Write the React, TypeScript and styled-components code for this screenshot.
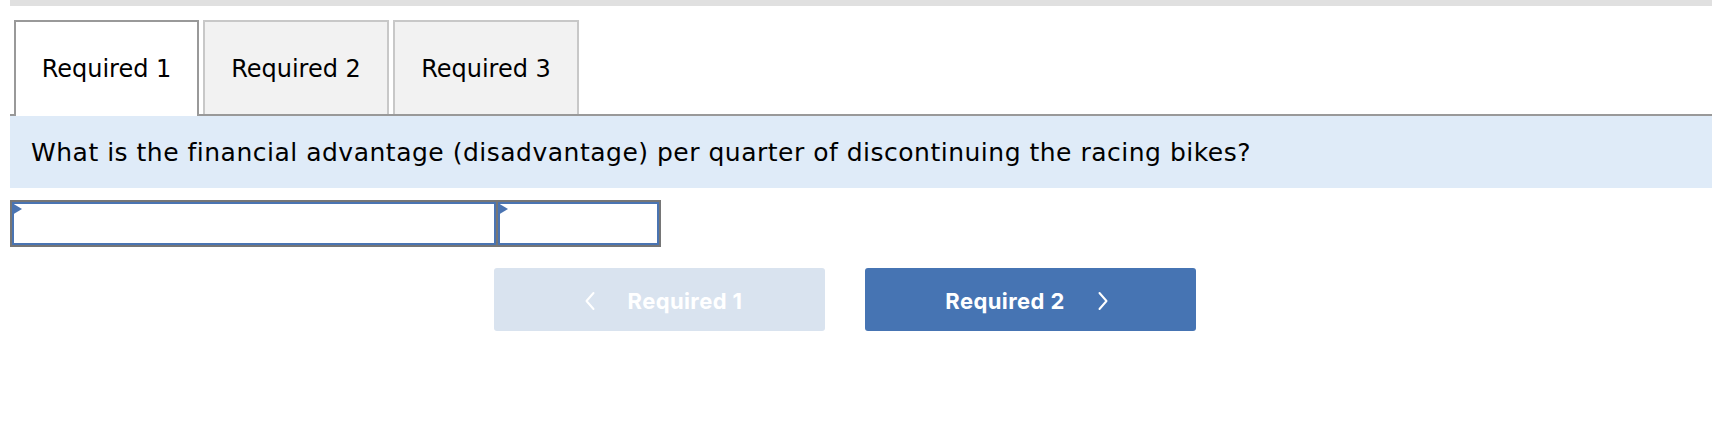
import React from "react";
import styled, { createGlobalStyle } from "styled-components";

const GlobalStyle = createGlobalStyle`
  html, body {
    margin: 0;
    padding: 0;
    background: #ffffff;
  }
  body {
    font-family: "DejaVu Sans", Verdana, sans-serif;
    color: #000;
  }
`;

const Page = styled.div`
  width: 1702px;
  margin-left: 10px;
  display: flex;
  flex-direction: column;
`;

const TopBar = styled.div`
  height: 6px;
  background: #e0e0e0;
`;

const TabRow = styled.div`
  margin-top: 14px;
  display: flex;
  align-items: flex-start;
  gap: 4px;
  padding-left: 4px;
  border-bottom: 2px solid #999999;
  height: 94px;
`;

const Tab = styled.div<{ $active?: boolean }>`
  box-sizing: border-box;
  width: ${(p) => (p.$active ? "185px" : "186px")};
  height: ${(p) => (p.$active ? "96px" : "94px")};
  border: 2px solid ${(p) => (p.$active ? "#999999" : "#c8c8c8")};
  border-bottom: none;
  background: ${(p) => (p.$active ? "#ffffff" : "#f2f2f2")};
  display: flex;
  align-items: center;
  justify-content: center;
  padding-bottom: ${(p) => (p.$active ? "2px" : "0")};
  padding-top: 2px;
  font-family: "DejaVu Sans", Verdana, sans-serif;
  font-size: 24px;
  color: #000;
  position: relative;
`;

const Question = styled.div`
  height: 72px;
  background: #dfebf8;
  display: flex;
  align-items: center;
  padding-left: 21px;
  font-family: "DejaVu Sans", Verdana, sans-serif;
  font-size: 25px;
  letter-spacing: 0.5px;
  color: #000;
`;

const InputTable = styled.div`
  margin-top: 12px;
  width: 651px;
  box-sizing: border-box;
  display: flex;
  gap: 2px;
  padding: 2px;
  background: #767676;
`;

const Cell = styled.div<{ $w: number }>`
  box-sizing: border-box;
  width: ${(p) => p.$w}px;
  height: 43px;
  background: #ffffff;
  border: 2px solid #4a74b2;
  position: relative;

  &::before {
    content: "";
    position: absolute;
    left: -2px;
    top: -1px;
    width: 0;
    height: 0;
    border-top: 6px solid transparent;
    border-bottom: 6px solid transparent;
    border-left: 10px solid #4a74b2;
  }
`;

const ButtonRow = styled.div`
  margin-top: 21px;
  padding-left: 484px;
  display: flex;
  gap: 40px;
`;

const NavButton = styled.button<{ $disabled?: boolean }>`
  box-sizing: border-box;
  width: 331px;
  height: 63px;
  border: none;
  border-radius: 3px;
  background: ${(p) => (p.$disabled ? "#d9e3ef" : "#4674b3")};
  color: #ffffff;
  display: flex;
  align-items: center;
  justify-content: center;
  gap: 33px;
  font-family: Inter, Roboto, sans-serif;
  font-weight: 700;
  font-size: 22px;
  letter-spacing: 0.4px;
  cursor: ${(p) => (p.$disabled ? "default" : "pointer")};
  padding: ${(p) => (p.$disabled ? "3px 0 0 8px" : "3px 8px 0 0")};
`;

const Chevron = ({ dir }: { dir: "left" | "right" }) => (
  <svg width="10" height="20" viewBox="0 0 10 20" fill="none">
    <polyline
      points={dir === "left" ? "8.5,2 1.5,10 8.5,18" : "1.5,2 8.5,10 1.5,18"}
      stroke="#ffffff"
      strokeWidth="2"
      strokeLinecap="round"
      strokeLinejoin="round"
    />
  </svg>
);

export default function App() {
  return (
    <>
      <GlobalStyle />
      <Page>
        <TopBar />
        <TabRow>
          <Tab $active>Required 1</Tab>
          <Tab>Required 2</Tab>
          <Tab>Required 3</Tab>
        </TabRow>
        <Question>
          What is the financial advantage (disadvantage) per quarter of discontinuing the racing bikes?
        </Question>
        <InputTable>
          <Cell $w={484} />
          <Cell $w={161} />
        </InputTable>
        <ButtonRow>
          <NavButton $disabled>
            <Chevron dir="left" />
            <span>Required 1</span>
          </NavButton>
          <NavButton>
            <span>Required 2</span>
            <Chevron dir="right" />
          </NavButton>
        </ButtonRow>
      </Page>
    </>
  );
}
